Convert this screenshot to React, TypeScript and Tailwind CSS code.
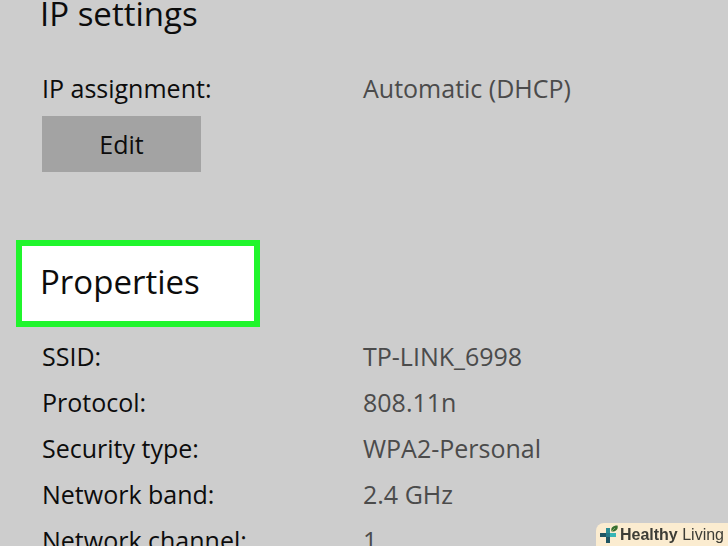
import { ReactNode } from "react";

type Row = { label: string; value: string };

const properties: Row[] = [
  { label: "SSID:", value: "TP-LINK_6998" },
  { label: "Protocol:", value: "808.11n" },
  { label: "Security type:", value: "WPA2-Personal" },
  { label: "Network band:", value: "2.4 GHz" },
  { label: "Network channel:", value: "1" },
];

const SettingRow = ({ label, value }: Row) => (
  <div className="grid grid-cols-[321px_1fr] text-[25px] leading-[46px]">
    <dt className="whitespace-nowrap text-[#0c0c0c]">{label}</dt>
    <dd className="whitespace-nowrap text-[#4b4b4b]">{value}</dd>
  </div>
);

const Highlight = ({ children }: { children: ReactNode }) => (
  <div className="ml-4 w-[244px] border-6 border-[#20f52c] bg-white pt-[14px] pb-[18px] pl-[18px]">
    {children}
  </div>
);

const Watermark = () => (
  <a
    href="#"
    className="fixed right-0 bottom-0 flex h-[23px] items-center rounded-tl-lg bg-[#fbecd0] pr-1 pl-1 font-['Liberation_Sans',sans-serif] text-base text-[#3d3d36]"
  >
    <svg className="h-5 w-5" viewBox="0 0 20 20" aria-hidden="true">
      <path d="M6 3h4v5H6z" fill="#2a8c93" />
      <path d="M0 8h6v4H0z" fill="#1e5563" />
      <path d="M10 8h6v4h-6z" fill="#38b5b5" />
      <path d="M6 12h4v6H6z" fill="#1e5563" />
      <path d="M6 8h4v4H6z" fill="#237887" />
      <path d="M11.5 6.5c-1-3.5 1-6 6-6 1 3-1 6.500-6 6z" fill="#38702f" />
      <path d="M12 6l3-3" stroke="#a5bf83" strokeWidth=".7" />
    </svg>
    <span className="whitespace-nowrap">
      <b>Healthy</b> Living
    </span>
  </a>
);

export default function App() {
  return (
    <main className="h-screen overflow-hidden bg-[#cdcdcd] font-['Open_Sans','Noto_Sans',sans-serif]">
      <section>
        <h2 className="pl-10 text-[33px] leading-7 text-[#0c0c0c]">IP settings</h2>
        <div className="mt-[37px] pl-[42px]">
          <dl>
            <SettingRow label="IP assignment:" value="Automatic (DHCP)" />
          </dl>
          <button
            type="button"
            className="mt-[5px] h-14 w-[159px] bg-[#a3a3a3] pt-0.5 text-[25px] text-[#0c0c0c]"
          >
            Edit
          </button>
        </div>
      </section>

      <section className="mt-[68px]">
        <Highlight>
          <h2 className="text-[33px] leading-[43px] text-[#0c0c0c]">Properties</h2>
        </Highlight>
        <dl className="mt-[6px] pl-[42px]">
          {properties.map((row) => (
            <SettingRow key={row.label} label={row.label} value={row.value} />
          ))}
        </dl>
      </section>

      <Watermark />
    </main>
  );
}
